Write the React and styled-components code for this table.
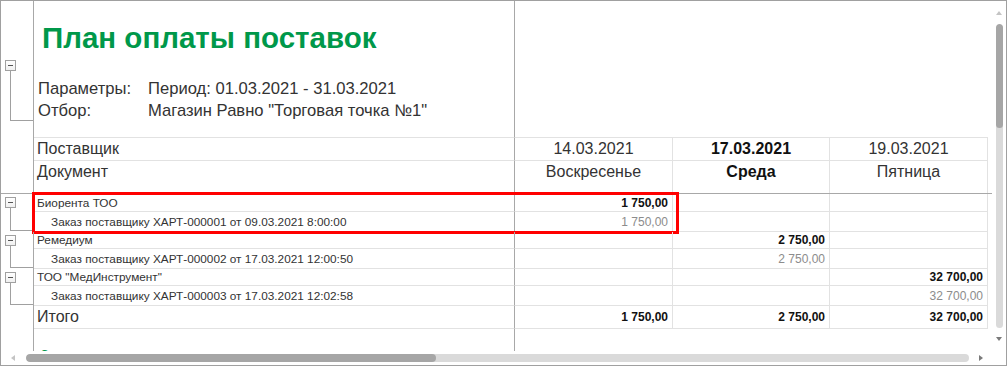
import React from 'react';
import styled, { createGlobalStyle } from 'styled-components';

const GlobalStyle = createGlobalStyle`
  html, body {
    margin: 0;
    padding: 0;
    background: #fff;
  }
  body {
    font-family: "Liberation Sans", Arial, sans-serif;
    color: #333;
  }
`;

const GRID = '#e2e2e2';
const FROZEN = '#a8a8a8';

const Frame = styled.div`
  width: 1007px;
  height: 366px;
  box-sizing: border-box;
  border: 1px solid #a0a0a0;
  display: grid;
  grid-template-columns: 991px 1fr;
  grid-template-rows: 350px 1fr;
  overflow: hidden;
  background: #fff;
`;

const Viewport = styled.div`
  display: flex;
  flex-direction: column;
  overflow: hidden;
`;

/* one horizontal band: tree gutter on the left, sheet rows on the right */
const Band = styled.div`
  display: flex;
  position: relative;
  flex: ${p => (p.$grow ? 1 : 'none')};
  border-bottom: ${p => (p.$strong ? `1px solid ${FROZEN}` : 'none')};
`;

const Gutter = styled.div`
  width: 33px;
  flex: none;
  box-sizing: border-box;
  border-right: 1px solid ${FROZEN};
  display: flex;
  flex-direction: column;
  padding-top: ${p => p.$top || 0}px;
`;

const Toggle = styled.div`
  width: 11px;
  height: 11px;
  margin-left: 4px;
  box-sizing: border-box;
  border: 1px solid #a0a0a0;
  background: linear-gradient(#fff, #f0f0f0);
  display: flex;
  align-items: center;
  justify-content: center;
  &::before {
    content: '';
    width: 5px;
    height: 1px;
    background: #555;
  }
`;

const Bracket = styled.div`
  flex: 1;
  margin-left: 9px;
  margin-bottom: ${p => p.$bottom}px;
  border-left: 1px solid #a0a0a0;
  border-bottom: 1px solid #a0a0a0;
`;

const Body = styled.div`
  flex: 1;
  display: flex;
  flex-direction: column;
`;

const Row = styled.div`
  display: flex;
  height: ${p => p.$h}px;
  flex: ${p => (p.$h ? 'none' : 1)};
`;

const widths = { a: 481, b: 158, c: 157, d: 158 };

const Cell = styled.div`
  width: ${p => widths[p.$col]}px;
  flex: none;
  box-sizing: border-box;
  border-right: 1px solid ${p => (p.$col === 'a' ? FROZEN : GRID)};
  border-bottom: ${p => (p.$open ? 'none' : `1px solid ${GRID}`)};
  display: flex;
  align-items: ${p => (p.$top ? 'flex-start' : 'center')};
  justify-content: ${p =>
    p.$align === 'right' ? 'flex-end' : p.$align === 'center' ? 'center' : 'flex-start'};
  padding: ${p => (p.$top ? '2px' : '0')} ${p => (p.$align === 'right' ? 4 : 3)}px 0 ${p => p.$indent || 3}px;
  font-size: ${p => p.$size || 11.8}px;
  font-weight: ${p => (p.$bold ? 700 : 400)};
  color: ${p => (p.$muted ? '#8c8c8c' : p.$bold ? '#111' : '#333')};
  white-space: nowrap;
  overflow: hidden;
`;

const Span = styled.div`
  width: 473px;
  flex: none;
  box-sizing: border-box;
  border-bottom: ${p => (p.$open ? 'none' : `1px solid ${GRID}`)};
`;

const TitleCell = styled.div`
  width: 481px;
  flex: none;
  box-sizing: border-box;
  border-right: 1px solid ${FROZEN};
  border-bottom: 1px solid ${GRID};
  padding: 21px 0 0 8px;
`;

const Title = styled.h1`
  margin: 0 0 24px;
  font-size: 29.5px;
  line-height: 32px;
  font-weight: 700;
  color: #00984a;
`;

const Params = styled.div`
  display: grid;
  grid-template-columns: 110px auto;
  margin-left: -4px;
  font-size: 16.6px;
  line-height: 22px;
  color: #333;
`;

const Footnote = styled.div`
  padding: 17px 0 0 3px;
  font-size: 12px;
  color: #00984a;
  white-space: nowrap;
`;

const Highlight = styled.div`
  position: absolute;
  left: 31px;
  top: -2px;
  width: 647px;
  height: 42px;
  box-sizing: border-box;
  border: 3px solid #ff0000;
  pointer-events: none;
`;

/* scrollbars */
const VScroll = styled.div`
  display: flex;
  flex-direction: column;
  align-items: center;
  padding-top: 10px;
`;

const VTrack = styled.div`
  width: 7px;
  height: 304px;
  margin-top: 9px;
  border-radius: 4px;
  background: #dadada;
  overflow: hidden;
`;

const VThumb = styled.div`
  height: 104px;
  border-radius: 4px;
  background: #a6a6a6;
`;

const HScroll = styled.div`
  display: flex;
  align-items: center;
  padding-left: 10px;
`;

const HTrack = styled.div`
  width: 943px;
  height: 8px;
  margin-left: 11px;
  margin-right: 10px;
  border-radius: 4px;
  background: #dadada;
  overflow: hidden;
`;

const HThumb = styled.div`
  width: 410px;
  height: 8px;
  border-radius: 4px;
  background: #a6a6a6;
`;

const Arrow = styled.div`
  width: 0;
  height: 0;
  border-style: solid;
  ${p =>
    ({
      up: `border-width: 0 3.5px 4px 3.5px; border-color: transparent transparent ${p.$c} transparent;`,
      down: `border-width: 4px 3.5px 0 3.5px; border-color: ${p.$c} transparent transparent transparent; margin-top: 9px;`,
      left: `border-width: 3.5px 4px 3.5px 0; border-color: transparent ${p.$c} transparent transparent;`,
      right: `border-width: 3.5px 0 3.5px 4px; border-color: transparent transparent transparent ${p.$c};`,
    })[p.$dir]}
`;

const days = [
  { date: '14.03.2021', name: 'Воскресенье' },
  { date: '17.03.2021', name: 'Среда', bold: true },
  { date: '19.03.2021', name: 'Пятница' },
];

const suppliers = [
  {
    name: 'Биорента ТОО',
    doc: 'Заказ поставщику ХАРТ-000001 от 09.03.2021 8:00:00',
    col: 'b',
    sum: '1 750,00',
    h: 18,
    marked: true,
  },
  {
    name: 'Ремедиум',
    doc: 'Заказ поставщику ХАРТ-000002 от 17.03.2021 12:00:50',
    col: 'c',
    sum: '2 750,00',
    h: 17,
  },
  {
    name: 'ТОО "МедИнструмент"',
    doc: 'Заказ поставщику ХАРТ-000003 от 17.03.2021 12:02:58',
    col: 'd',
    sum: '32 700,00',
    h: 17,
  },
];

const cols = ['b', 'c', 'd'];

const SupplierGroup = ({ s }) => (
  <Band>
    <Gutter $top={3}>
      <Toggle />
      <Bracket $bottom={1} />
    </Gutter>
    <Body>
      <Row $h={s.h}>
        <Cell $col="a">{s.name}</Cell>
        {cols.map(c => (
          <Cell key={c} $col={c} $align="right" $bold $size={12}>
            {c === s.col ? s.sum : ''}
          </Cell>
        ))}
      </Row>
      <Row $h={20}>
        <Cell $col="a" $indent={17}>{s.doc}</Cell>
        {cols.map(c => (
          <Cell key={c} $col={c} $align="right" $muted $size={12}>
            {c === s.col ? s.sum : ''}
          </Cell>
        ))}
      </Row>
    </Body>
    {s.marked && <Highlight />}
  </Band>
);

export default function App() {
  return (
    <>
      <GlobalStyle />
      <Frame>
        <Viewport>
          <Band>
            <Gutter $top={59}>
              <Toggle />
              <Bracket $bottom={17} />
            </Gutter>
            <Body>
              <Row $h={137}>
                <TitleCell>
                  <Title>План оплаты поставок</Title>
                  <Params>
                    <span>Параметры:</span>
                    <span>Период: 01.03.2021 - 31.03.2021</span>
                    <span>Отбор:</span>
                    <span>Магазин Равно "Торговая точка №1"</span>
                  </Params>
                </TitleCell>
                <Span />
              </Row>
            </Body>
          </Band>

          <Band $strong>
            <Gutter />
            <Body>
              <Row $h={23}>
                <Cell $col="a" $size={16}>Поставщик</Cell>
                {days.map((d, i) => (
                  <Cell key={d.date} $col={cols[i]} $align="center" $size={16} $bold={d.bold}>
                    {d.date}
                  </Cell>
                ))}
              </Row>
              <Row $h={32}>
                <Cell $col="a" $size={16} $top $open>Документ</Cell>
                {days.map((d, i) => (
                  <Cell key={d.name} $col={cols[i]} $align="center" $size={16} $bold={d.bold} $top $open>
                    {d.name}
                  </Cell>
                ))}
              </Row>
            </Body>
          </Band>

          {suppliers.map(s => (
            <SupplierGroup key={s.name} s={s} />
          ))}

          <Band>
            <Gutter />
            <Body>
              <Row $h={23}>
                <Cell $col="a" $size={16}>Итого</Cell>
                {suppliers.map(s => (
                  <Cell key={s.col} $col={s.col} $align="right" $bold $size={12}>
                    {s.sum}
                  </Cell>
                ))}
              </Row>
            </Body>
          </Band>

          <Band $grow>
            <Gutter />
            <Body>
              <Row>
                <Cell $col="a" $open $top>
                  <Footnote>С</Footnote>
                </Cell>
              </Row>
            </Body>
          </Band>
        </Viewport>

        <VScroll>
          <Arrow $dir="up" $c="#c4c4c4" />
          <VTrack>
            <VThumb />
          </VTrack>
          <Arrow $dir="down" $c="#7a7a7a" />
        </VScroll>

        <HScroll>
          <Arrow $dir="left" $c="#c4c4c4" />
          <HTrack>
            <HThumb />
          </HTrack>
          <Arrow $dir="right" $c="#7a7a7a" />
        </HScroll>
      </Frame>
    </>
  );
}
